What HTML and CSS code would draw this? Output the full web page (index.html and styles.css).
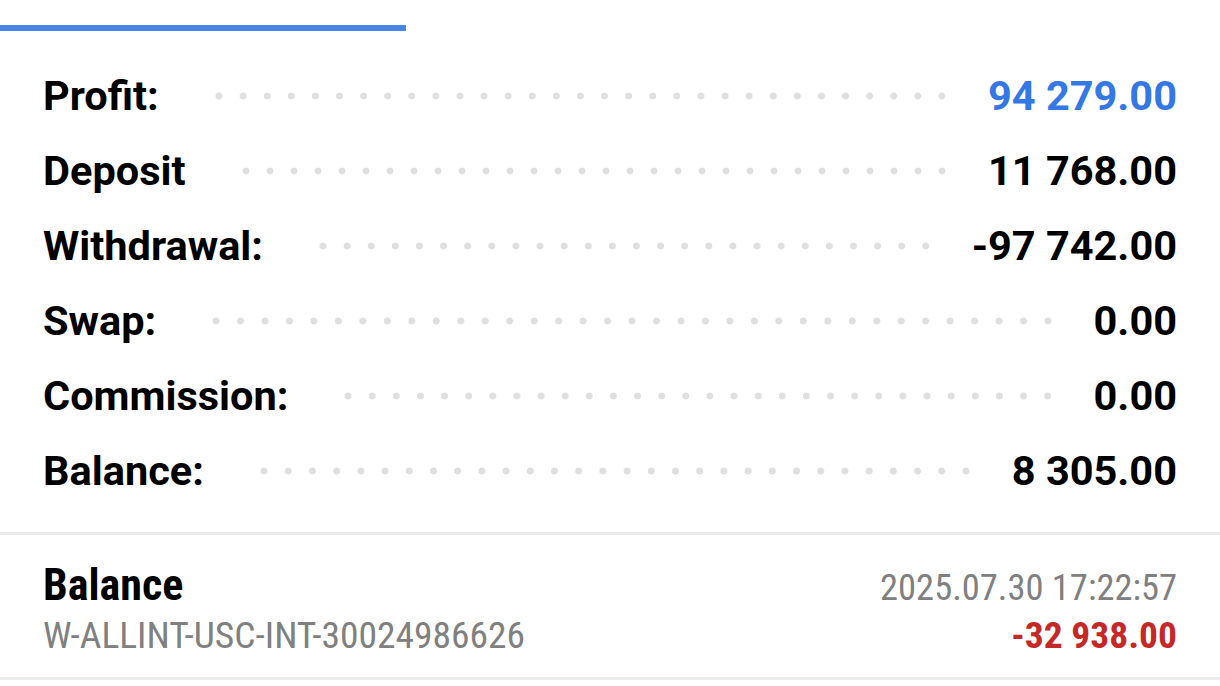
FILE: index.html
```html
<!DOCTYPE html>
<html lang="en">
<head>
<meta charset="UTF-8">
<meta name="viewport" content="width=device-width, initial-scale=1.0">
<title>Summary</title>
<link rel="stylesheet" href="styles.css">
</head>
<body>

<div class="tabbar"><div class="tab-indicator"></div></div>

<div class="summary">
    <div class="row">
        <span class="label">Profit:</span>
        <span class="dots"></span>
        <span class="value blue">94 279.00</span>
    </div>
    <div class="row">
        <span class="label">Deposit</span>
        <span class="dots"></span>
        <span class="value">11 768.00</span>
    </div>
    <div class="row">
        <span class="label">Withdrawal:</span>
        <span class="dots"></span>
        <span class="value">-97 742.00</span>
    </div>
    <div class="row">
        <span class="label">Swap:</span>
        <span class="dots"></span>
        <span class="value">0.00</span>
    </div>
    <div class="row">
        <span class="label">Commission:</span>
        <span class="dots"></span>
        <span class="value">0.00</span>
    </div>
    <div class="row">
        <span class="label">Balance:</span>
        <span class="dots"></span>
        <span class="value">8 305.00</span>
    </div>
</div>

<div class="deal">
    <div class="deal-line first">
        <span class="deal-title">Balance</span>
        <span class="deal-time">2025.07.30 17:22:57</span>
    </div>
    <div class="deal-line">
        <span class="deal-comment">W-ALLINT-USC-INT-30024986626</span>
        <span class="deal-amount">-32 938.00</span>
    </div>
</div>

</body>
</html>
```

FILE: styles.css
```css
body {
    background-color: #ffffff;
    color: #000000;
    font-family: Roboto, "Noto Sans", sans-serif;
    margin: 0;
    width: 1220px;
    height: 686px;
    overflow: hidden;
}
.tabbar {
    height: 31px;
    display: flex;
    align-items: flex-end;
}
.tab-indicator {
    width: 406px;
    height: 6px;
    background-color: #4a86e8;
}
.summary {
    padding: 27px 43px 24px 43px;
    border-bottom: 3px solid #ebebeb;
}
.row {
    display: flex;
    align-items: center;
    height: 75px;
    font-size: 41.5px;
    font-weight: 700;
}
.dots {
    flex: 1;
    height: 8px;
    margin: 0 34px 0 48px;
    background-image: radial-gradient(circle, #dfdfdf 3.2px, transparent 3.8px);
    background-size: 24px 8px;
    background-repeat: space no-repeat;
}
.value {
    text-align: right;
}
.blue {
    color: #3478e5;
}
.deal {
    padding: 24px 43px 0 43px;
    height: 118px;
    border-bottom: 3px solid #ebebeb;
    font-family: "Roboto Condensed", Roboto, sans-serif;
}
.deal-line {
    display: flex;
    justify-content: space-between;
    align-items: baseline;
    height: 50px;
    font-size: 37.5px;
}
.deal-line.first {
    height: 54px;
}
.deal-title {
    font-size: 44px;
    font-weight: 700;
}
.deal-time {
    font-size: 36.5px;
}
.deal-time,
.deal-comment {
    color: #808080;
}
.deal-amount {
    color: #c62828;
    font-weight: 700;
}
```
